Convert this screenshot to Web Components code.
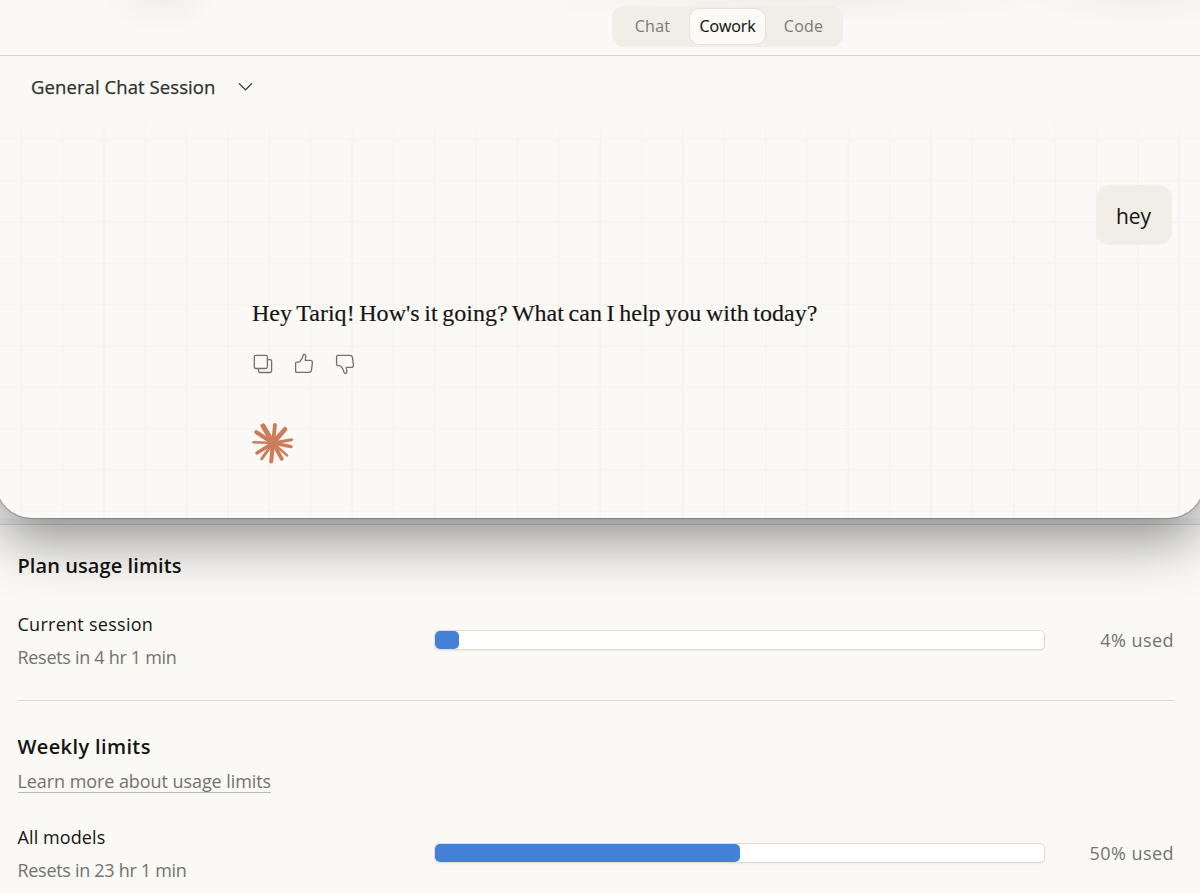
<!DOCTYPE html>
<html lang="en">
<head>
  <meta charset="utf-8">
  <title>Cowork</title>
  <style>
    body {
      margin: 0;
      width: 1200px;
      height: 893px;
      overflow: hidden;
      background-color: #faf9f5;
      font-family: "Open Sans", "Noto Sans", sans-serif;
      color: #141413;
    }
  </style>
</head>
<body>
  <chat-window>
    <mode-tabs slot="tabs">
      <mode-tab style="--w: 76px; --ls: 0.2px">Chat</mode-tab>
      <mode-tab active style="--w: 75px; --ls: -0.15px">Cowork</mode-tab>
      <mode-tab style="--w: 76px; --ls: 0.2px">Code</mode-tab>
    </mode-tabs>
    <session-title slot="title">General Chat Session</session-title>
    <user-message>hey</user-message>
    <bot-message>Hey Tariq! How's it going? What can I help you with today?</bot-message>
  </chat-window>
  <usage-panel>
    <span slot="plan-title">Plan usage limits</span>
    <usage-row slot="plan" percent="4">
      <span slot="name">Current session</span>
      <span slot="reset">Resets in 4 hr 1 min</span>
    </usage-row>
    <span slot="weekly-title" style="letter-spacing: 0.38px">Weekly limits</span>
    <span slot="link">Learn more about usage limits</span>
    <usage-row slot="weekly" percent="50">
      <span slot="name" style="letter-spacing: 0.1px">All models</span>
      <span slot="reset">Resets in 23 hr 1 min</span>
    </usage-row>
  </usage-panel>

  <script>
    function attach(element, html) {
      const template = document.createElement("template");
      template.innerHTML = html;
      const shadowRoot = element.attachShadow({ mode: "open" });
      shadowRoot.appendChild(template.content.cloneNode(true));
      return shadowRoot;
    }

    class ChatWindow extends HTMLElement {
      constructor() {
        super();
        attach(this, `
          <style>
            :host {
              display: block;
              position: relative;
              z-index: 1;
              height: 518px;
              margin: 0 -4px;
              box-sizing: border-box;
              border-radius: 0 0 36px 36px;
              background-color: #faf9f5;
              box-shadow: 0 0 1px 0.5px rgba(0, 0, 0, 0.2), 0 24px 56px -2px rgba(0, 0, 0, 0.42);
            }
            .top {
              display: flex;
              box-sizing: border-box;
              height: 56px;
              padding: 6px 0 0 616px;
              border-bottom: 1px solid #d6d5d1;
              background:
                radial-gradient(ellipse 60px 34px at 165px -3px, rgba(60, 60, 50, 0.05), transparent),
                radial-gradient(ellipse 290px 30px at 794px -4px, rgba(60, 60, 50, 0.06), transparent 95%),
                radial-gradient(ellipse 120px 30px at 1144px -4px, rgba(60, 60, 50, 0.05), transparent);
            }
            .title {
              height: 63px;
              padding: 0 4px;
            }
            .messages {
              display: flex;
              flex-direction: column;
              box-sizing: border-box;
              height: 399px;
              padding: 66px 32px 0 256px;
              border-radius: 0 0 36px 36px;
              background:
                linear-gradient(#faf9f5, rgba(250, 249, 245, 0) 24px),
                repeating-linear-gradient(90deg, transparent 0 24.3px, #f5f4f0 24.8px 25.8px, transparent 26.3px 41.35px),
                repeating-linear-gradient(180deg, transparent 0 19.3px, #f5f4f0 19.8px 20.8px, transparent 21.3px 41.35px);
            }
          </style>
          <div class="top"><slot name="tabs"></slot></div>
          <div class="title"><slot name="title"></slot></div>
          <div class="messages"><slot></slot></div>
        `);
      }
    }

    class ModeTabs extends HTMLElement {
      constructor() {
        super();
        attach(this, `
          <style>
            :host {
              display: flex;
              box-sizing: border-box;
              width: 231px;
              height: 41px;
              padding: 3px 2px;
              border-radius: 12px;
              background-color: #f0eee7;
            }
          </style>
          <slot></slot>
        `);
      }
    }

    class ModeTab extends HTMLElement {
      constructor() {
        super();
        attach(this, `
          <style>
            :host {
              display: flex;
              align-items: center;
              justify-content: center;
              box-sizing: border-box;
              width: var(--w);
              height: 35px;
              padding: 0 0 2px 1px;
              border-radius: 9px;
              font-size: 16px;
              letter-spacing: var(--ls, 0.1px);
              color: #7b7a74;
            }
            :host([active]) {
              padding-left: 0;
              background-color: #fbfaf7;
              box-shadow: 0 0 0 1px #e5e3dc;
              color: #141413;
              -webkit-text-stroke: 0.15px #141413;
            }
          </style>
          <slot></slot>
        `);
      }
    }

    class SessionTitle extends HTMLElement {
      constructor() {
        super();
        attach(this, `
          <style>
            :host {
              display: flex;
              align-items: center;
              gap: 23px;
              height: 61px;
              padding-left: 31px;
              font-size: 18.5px;
              letter-spacing: 0.08px;
              color: #30302d;
              -webkit-text-stroke: 0.25px #30302d;
            }
            svg {
              margin-top: 1px;
            }
          </style>
          <slot></slot>
          <svg width="15" height="10" viewBox="0 0 15 10" fill="none" stroke="#30302d" stroke-width="1.3" stroke-linecap="round" stroke-linejoin="round">
            <path d="M1.3 1.6L7.5 7.9L13.7 1.6"/>
          </svg>
        `);
      }
    }

    class UserMessage extends HTMLElement {
      constructor() {
        super();
        attach(this, `
          <style>
            :host {
              display: flex;
              align-items: center;
              justify-content: center;
              align-self: flex-end;
              box-sizing: border-box;
              width: 76px;
              height: 60px;
              padding: 1px 1px 0 0;
              border-radius: 14px;
              background-color: #f0eee7;
              font-size: 21px;
            }
          </style>
          <slot></slot>
        `);
      }
    }

    class BotMessage extends HTMLElement {
      constructor() {
        super();
        // rays of the mark: end x, end y, thickness, measured from its centre
        const rays = [
          [-10, -17.2, 5], [2, -18.2, 3.8], [12, -13.8, 4.8], [18.6, -3.2, 3],
          [18, 3.6, 3.5], [14, 12.4, 2.6], [8.8, 15.8, 3.8], [-1.8, 18.6, 4],
          [-11.3, 15.8, 3], [-16, 10, 3.5], [-19.6, -0.8, 2.5], [-16.6, -10.8, 4.2]
        ];
        const lines = rays.map(r => `<path d="M0 0L${r[0]} ${r[1]}" stroke-width="${r[2]}"/>`).join("");
        const thumb = "M4 9.2H5.6Q6.6 9.1 7.2 8.2L9.2 5.2L10.1 2.2Q10.5 1.1 11.5 1.3Q13 1.7 12.8 3.6L12.2 7.4H17.4Q19.6 7.5 19.4 9.8L18.5 17Q18.2 19.4 15.8 19.4H4Q2.6 19.4 2.6 18V10.6Q2.6 9.2 4 9.2Z";
        attach(this, `
          <style>
            :host {
              display: block;
              padding-top: 52px;
            }
            .text {
              height: 32px;
              line-height: 33px;
              white-space: nowrap;
              font-family: "Liberation Serif", serif;
              font-size: 24px;
              letter-spacing: 0.02px;
              word-spacing: -1.4px;
              -webkit-text-stroke: 0.15px #141413;
            }
            .actions {
              display: flex;
              gap: 19px;
              padding-top: 24px;
              height: 22px;
            }
            .mark {
              display: block;
              margin: 46px 0 0 -0.5px;
            }
          </style>
          <div class="text"><slot></slot></div>
          <div class="actions">
            <svg width="22" height="22" viewBox="0 0 22 22" fill="none" stroke="#73726c" stroke-width="1.3" stroke-linejoin="round">
              <rect x="2.3" y="2.4" width="13.1" height="13.1" rx="1.4"/>
              <path d="M15.4 6.6H18.2Q19.6 6.6 19.6 8V18.1Q19.6 19.5 18.2 19.5H7.9Q6.5 19.5 6.5 18.1V15.5"/>
            </svg>
            <svg width="22" height="22" viewBox="0 0 22 22" fill="none" stroke="#73726c" stroke-width="1.3" stroke-linejoin="round">
              <path d="${thumb}"/>
            </svg>
            <svg width="22" height="22" viewBox="0 0 22 22" fill="none" stroke="#73726c" stroke-width="1.3" stroke-linejoin="round">
              <path transform="matrix(1 0 0 -1 0 21.8)" d="${thumb}"/>
            </svg>
          </div>
          <svg class="mark" width="42" height="44" viewBox="-21 -22 42 44" stroke="#cd7c5b" stroke-linecap="round">
            ${lines}<circle r="5" fill="#cd7c5b" stroke="none"/>
          </svg>
        `);
      }
    }

    class UsagePanel extends HTMLElement {
      constructor() {
        super();
        attach(this, `
          <style>
            :host {
              display: block;
              padding-top: 6px;
              background: linear-gradient(#eff1f2 6px, transparent 6px);
            }
            .content {
              padding: 26px 26px 0 17.5px;
              border-top: 1px solid #d5d6d6;
            }
            .heading {
              height: 30px;
              line-height: 30px;
              font-size: 20px;
              font-weight: 600;
              letter-spacing: 0.08px;
            }
            .rule {
              height: 1px;
              margin: 31px 0;
              background-color: #dcdbd6;
            }
            .link {
              display: flex;
              margin: 7px 0 32px;
              font-size: 18px;
              line-height: 25px;
              letter-spacing: -0.07px;
              color: #73726c;
            }
            .link span {
              height: 23px;
              border-bottom: 1px solid #b9b8b3;
            }
            .plan {
              margin-top: 31px;
            }
          </style>
          <div class="content">
            <div class="heading"><slot name="plan-title"></slot></div>
            <div class="plan"><slot name="plan"></slot></div>
            <div class="rule"></div>
            <div class="heading"><slot name="weekly-title"></slot></div>
            <div class="link"><span><slot name="link"></slot></span></div>
            <slot name="weekly"></slot>
          </div>
        `);
      }
    }

    class UsageRow extends HTMLElement {
      constructor() {
        super();
        this.root = attach(this, `
          <style>
            :host {
              display: grid;
              grid-template-columns: 416.5px 611px 1fr;
              align-items: center;
              height: 57px;
              font-size: 18px;
            }
            .name, .reset {
              height: 24px;
              line-height: 24px;
            }
            .name {
              letter-spacing: 0.27px;
            }
            .reset {
              margin-top: 9px;
              letter-spacing: -0.3px;
              color: #73726c;
            }
            .bar {
              height: 20px;
              margin-bottom: 1px;
              box-sizing: border-box;
              border: 1px solid #dddcd8;
              border-radius: 5px;
              background-color: #ffffff;
              box-shadow: 0 1px 2px rgba(0, 0, 0, 0.06);
            }
            .fill {
              height: 18px;
              border-radius: 5px;
              background-color: #4380d6;
            }
            .percent {
              margin-bottom: 2px;
              text-align: right;
              letter-spacing: 0.45px;
              color: #73726c;
            }
          </style>
          <div>
            <div class="name"><slot name="name"></slot></div>
            <div class="reset"><slot name="reset"></slot></div>
          </div>
          <div class="bar"><div class="fill"></div></div>
          <div class="percent"></div>
        `);
      }

      connectedCallback() {
        const percent = this.getAttribute("percent");
        this.root.querySelector(".fill").style.width = percent + "%";
        this.root.querySelector(".percent").textContent = percent + "% used";
      }
    }

    customElements.define("chat-window", ChatWindow);
    customElements.define("mode-tabs", ModeTabs);
    customElements.define("mode-tab", ModeTab);
    customElements.define("session-title", SessionTitle);
    customElements.define("user-message", UserMessage);
    customElements.define("bot-message", BotMessage);
    customElements.define("usage-panel", UsagePanel);
    customElements.define("usage-row", UsageRow);
  </script>
</body>
</html>
